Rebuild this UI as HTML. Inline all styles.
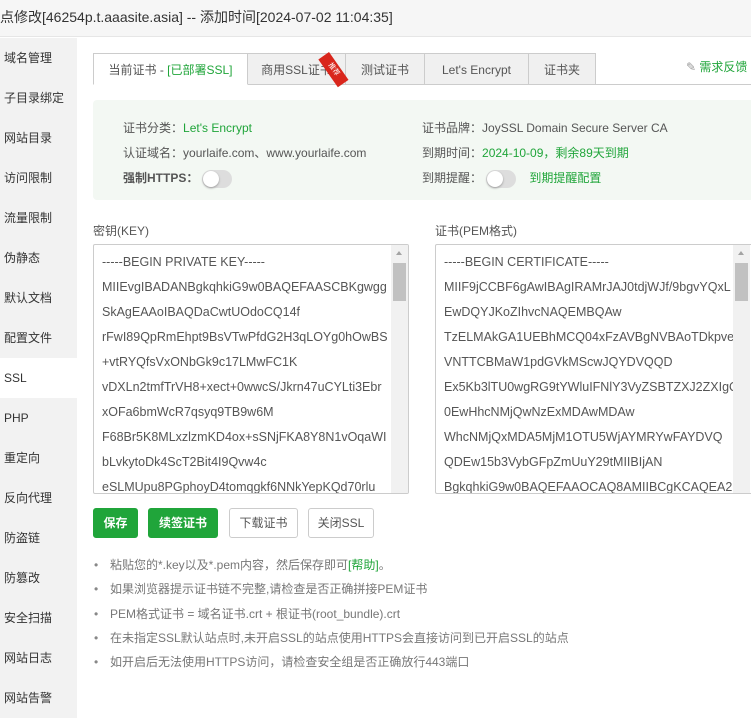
<!DOCTYPE html><html><head><meta charset="utf-8"><style>
*{box-sizing:border-box;margin:0;padding:0}
body{width:751px;height:718px;overflow:hidden;background:#fff;font-family:"Liberation Sans","Noto Sans CJK SC",sans-serif;font-size:12px;color:#555;position:relative}
.title{position:absolute;left:0;top:0;width:751px;height:37px;background:#f6f6f6;border-bottom:1px solid #e6e6e6;font-size:14px;color:#333;line-height:34px;padding-left:0}
.side{position:absolute;left:0;top:38px;width:77px;height:680px;background:#f2f2f2}
.side div{height:40px;line-height:40px;padding-left:4px;font-size:12px;color:#333}
.side .on{background:#fff}
.a{position:absolute}
.tabs{position:absolute;left:93px;top:53px;height:32px;display:flex;border-bottom:1px solid #ccc;width:658px}
.tab{flex:none;height:32px;line-height:32px;border:1px solid #ccc;border-left:none;background:#f0f0f0;text-align:center;font-size:12px;color:#555;white-space:nowrap}
.tab:first-child{border-left:1px solid #ccc;background:#fff;border-bottom:1px solid #fff}
.g{color:#20a53a}
.info{position:absolute;left:93px;top:100px;width:670px;height:100px;background:#f3f8f3;border-radius:4px}
.lab{color:#555}
.sw{display:inline-block;width:30px;height:18px;border-radius:9px;background:#ddd;vertical-align:middle;position:relative;margin-left:4px}
.sw:after{content:"";position:absolute;left:1px;top:1px;width:16px;height:16px;border-radius:50%;background:#fff;box-shadow:0 1px 2px #999}
.ta{position:absolute;top:244px;height:250px;border:1px solid #ccc;border-radius:2px;overflow:hidden;font-size:12.5px;color:#555;padding:5px 0 0 8px;line-height:25px;white-space:nowrap}
.sb{position:absolute;right:0;top:0;width:17px;height:100%;background:#f1f1f1}
.sb i{position:absolute;left:2px;top:18px;width:13px;height:38px;background:#c1c1c1}
.sb b{position:absolute;left:5px;top:6px;border:3px solid transparent;border-bottom:4px solid #a3a3a3;border-top:0}
.btn{position:absolute;top:508px;height:30px;line-height:28px;border-radius:3px;text-align:center;font-size:12px}
.gb{background:#20a53a;color:#fff;font-weight:bold;border:1px solid #20a53a}
.wb{border:1px solid #ccc;background:#fff;color:#555}
ul{position:absolute;left:93px;top:553px;list-style:none}
li{height:24.3px;line-height:24px;color:#777;font-size:12px}
li:before{content:"•";display:inline-block;width:16px;color:#888;padding-left:1px}
</style></head><body>
<div class="title">点修改[46254p.t.aaasite.asia] -- 添加时间[2024-07-02 11:04:35]</div>
<div class="side"><div>域名管理</div><div>子目录绑定</div><div>网站目录</div><div>访问限制</div><div>流量限制</div><div>伪静态</div><div>默认文档</div><div>配置文件</div><div class="on">SSL</div><div>PHP</div><div>重定向</div><div>反向代理</div><div>防盗链</div><div>防篡改</div><div>安全扫描</div><div>网站日志</div><div>网站告警</div></div>
<div class="tabs"><div class="tab" style="width:155px">当前证书 - <span class="g">[已部署SSL]</span></div><div class="tab" style="width:98px">商用SSL证书</div><div class="tab" style="width:79px">测试证书</div><div class="tab" style="width:104px">Let's Encrypt</div><div class="tab" style="width:67px">证书夹</div></div>
<div class="a" style="width:34px;height:13px;background:#d9261c;transform:rotate(55deg);transform-origin:0 0;left:329px;top:52px;font-size:7px;color:#fff;text-align:center;line-height:13px">推荐</div>
<div class="a g" style="left:686px;top:58px;font-size:12px"><span style="color:#999">✎</span> 需求反馈</div>
<div class="info"></div>
<div class="a" style="left:123px;top:116px;line-height:25px"><span class="lab">证书分类：</span><span class="g">Let's Encrypt</span><br><span class="lab">认证域名：</span>yourlaife.com、www.yourlaife.com<br><b style="font-weight:bold;color:#555">强制HTTPS：</b><span class="sw"></span></div>
<div class="a" style="left:422px;top:116px;line-height:25px"><span>证书品牌：</span>JoySSL Domain Secure Server CA<br><span>到期时间：</span><span class="g">2024-10-09，剩余89天到期</span><br><span>到期提醒：</span><span class="sw"></span> <span class="g" style="margin-left:10px">到期提醒配置</span></div>
<div class="a" style="left:93px;top:222px">密钥(KEY)</div>
<div class="a" style="left:435px;top:222px">证书(PEM格式)</div>
<div class="ta" style="left:93px;width:316px">-----BEGIN PRIVATE KEY-----<br>MIIEvgIBADANBgkqhkiG9w0BAQEFAASCBKgwgg<br>SkAgEAAoIBAQDaCwtUOdoCQ14f<br>rFwI89QpRmEhpt9BsVTwPfdG2H3qLOYg0hOwBS<br>+vtRYQfsVxONbGk9c17LMwFC1K<br>vDXLn2tmfTrVH8+xect+0wwcS/Jkrn47uCYLti3Ebr<br>xOFa6bmWcR7qsyq9TB9w6M<br>F68Br5K8MLxzlzmKD4ox+sSNjFKA8Y8N1vOqaWI<br>bLvkytoDk4ScT2Bit4I9Qvw4c<br>eSLMUpu8PGphoyD4tomqgkf6NNkYepKQd70rlu<div class="sb"><b></b><i></i></div></div>
<div class="ta" style="left:435px;width:330px">-----BEGIN CERTIFICATE-----<br>MIIF9jCCBF6gAwIBAgIRAMrJAJ0tdjWJf/9bgvYQxL<br>EwDQYJKoZIhvcNAQEMBQAw<br>TzELMAkGA1UEBhMCQ04xFzAVBgNVBAoTDkpve<br>VNTTCBMaW1pdGVkMScwJQYDVQQD<br>Ex5Kb3lTU0wgRG9tYWluIFNlY3VyZSBTZXJ2ZXIgQ<br>0EwHhcNMjQwNzExMDAwMDAw<br>WhcNMjQxMDA5MjM1OTU5WjAYMRYwFAYDVQ<br>QDEw15b3VybGFpZmUuY29tMIIBIjAN<br>BgkqhkiG9w0BAQEFAAOCAQ8AMIIBCgKCAQEA2<div class="sb" style="right:14px"><b></b><i></i></div></div>
<div class="btn gb" style="left:93px;width:45px">保存</div>
<div class="btn gb" style="left:148px;width:70px">续签证书</div>
<div class="btn wb" style="left:229px;width:69px">下载证书</div>
<div class="btn wb" style="left:308px;width:66px">关闭SSL</div>
<ul><li>粘贴您的*.key以及*.pem内容，然后保存即可<span class="g">[帮助]</span>。</li><li>如果浏览器提示证书链不完整,请检查是否正确拼接PEM证书</li><li>PEM格式证书 = 域名证书.crt + 根证书(root_bundle).crt</li><li>在未指定SSL默认站点时,未开启SSL的站点使用HTTPS会直接访问到已开启SSL的站点</li><li>如开启后无法使用HTTPS访问，请检查安全组是否正确放行443端口</li></ul>
</body></html>
